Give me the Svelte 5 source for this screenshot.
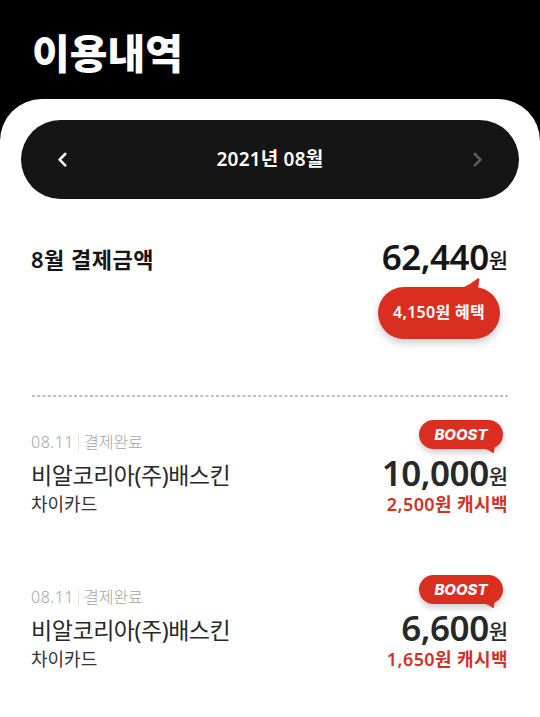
<script>
	let month = '2021년 08월';
	let total = '62,440';
	let benefit = '4,150원 혜택';

	let payments = [
		{
			date: '08.11',
			status: '결제완료',
			store: '비알코리아(주)배스킨',
			method: '차이카드',
			amount: '10,000',
			cashback: '2,500원 캐시백'
		},
		{
			date: '08.11',
			status: '결제완료',
			store: '비알코리아(주)배스킨',
			method: '차이카드',
			amount: '6,600',
			cashback: '1,650원 캐시백'
		}
	];
</script>

<main>
	<h1>이용내역</h1>
	<div class="sheet">
		<nav>
			<button aria-label="이전 달">
				<svg width="10" height="16" viewBox="0 0 10 16">
					<path d="M8.2 2 L2.6 7.7 L8.2 13.4" />
				</svg>
			</button>
			<span class="month">{month}</span>
			<button class="disabled" aria-label="다음 달" disabled>
				<svg width="10" height="16" viewBox="0 0 10 16">
					<path d="M1.8 2 L7.4 7.7 L1.8 13.4" />
				</svg>
			</button>
		</nav>

		<section class="summary">
			<h2>8월 결제금액</h2>
			<div class="right">
				<p class="amount"><span>{total}</span><em>원</em></p>
				<div class="benefit">
					<svg class="tail" width="20" height="12" viewBox="0 0 20 12">
						<path d="M0 10 Q9 6 15.6 0.5 Q17.6 -0.6 17.4 1.6 L16 11 Z" />
					</svg>
					<span>{benefit}</span>
				</div>
			</div>
		</section>

		<svg class="divider" width="476" height="2">
			<line x1="0" y1="1" x2="476" y2="1" />
		</svg>

		<ul>
			{#each payments as payment}
				<li>
					<div class="left">
						<p class="meta">
							<span class="date">{payment.date}</span><i></i><span>{payment.status}</span>
						</p>
						<p class="store">{payment.store}</p>
						<p class="method">{payment.method}</p>
					</div>
					<div class="right">
						<div class="boost">
							<span>BOOST</span>
							<svg class="tail" width="12" height="8" viewBox="0 0 12 8">
								<path d="M0 2 L9.5 0 L9 6 Q8.6 7.6 7.2 6.6 Q4 3.6 0 3 Z" />
							</svg>
						</div>
						<p class="amount"><span>{payment.amount}</span><em>원</em></p>
						<p class="cashback">{payment.cashback}</p>
					</div>
				</li>
			{/each}
		</ul>
	</div>
</main>

<style>
	:global(body) {
		background: #000;
	}

	main {
		width: 540px;
		height: 717px;
		overflow: hidden;
		background: #000;
		color: #151515;
		font-family: 'Noto Sans', 'Noto Sans CJK KR', sans-serif;
		white-space: nowrap;
	}

	h1,
	h2,
	p,
	ul {
		margin: 0;
		padding: 0;
	}

	h1 {
		height: 99px;
		padding-left: 32px;
		box-sizing: border-box;
		color: #fff;
		font-family: 'Noto Sans CJK KR', sans-serif;
		font-size: 41px;
		font-weight: 900;
		letter-spacing: 0;
		line-height: 102px;
	}

	.sheet {
		height: 618px;
		padding: 21px 21px 0;
		box-sizing: border-box;
		border-radius: 42px 42px 0 0;
		background: #fff;
	}

	nav {
		display: flex;
		align-items: center;
		justify-content: space-between;
		height: 79px;
		padding: 0 36px;
		border-radius: 40px;
		background: #151515;
		color: #fff;
	}

	button {
		display: flex;
		padding: 0;
		border: 0;
		background: none;
	}

	button path {
		fill: none;
		stroke: #fff;
		stroke-width: 2.6;
		stroke-linecap: round;
		stroke-linejoin: round;
	}

	.disabled path {
		stroke: #5c5c5c;
	}

	.month {
		height: 40px;
		font-size: 19px;
		font-weight: 600;
		letter-spacing: 0.2px;
		line-height: 39px;
	}

	.summary {
		display: flex;
		justify-content: space-between;
		height: 196px;
		padding: 39px 11px 0;
		box-sizing: border-box;
	}

	h2 {
		height: 40px;
		margin-left: -1px;
		font-size: 22px;
		font-weight: 600;
		letter-spacing: 0.5px;
		line-height: 42px;
	}

	.right {
		display: flex;
		flex-direction: column;
		align-items: flex-end;
	}

	.amount {
		display: flex;
		align-items: baseline;
		height: 42px;
		font-size: 35px;
		font-weight: 600;
		letter-spacing: -0.5px;
		line-height: 38px;
	}

	.amount em {
		position: relative;
		top: -2px;
		font-size: 21px;
		font-style: normal;
		font-weight: 500;
		letter-spacing: 0;
	}

	.benefit {
		position: relative;
		width: 122px;
		height: 52px;
		margin: 7px 8px 0 0;
		border-radius: 26px;
		background: #da2f20;
		box-shadow: 0 4px 8px rgba(0, 0, 0, 0.2);
		color: #fff;
		font-size: 16px;
		font-weight: 600;
		letter-spacing: 0.3px;
		line-height: 50px;
		text-align: center;
	}

	.tail {
		position: absolute;
		fill: #da2f20;
	}

	.benefit .tail {
		top: -9px;
		right: 18px;
	}

	.divider {
		display: block;
		margin: 0 11px;
	}

	.divider line {
		stroke: #aaa;
		stroke-width: 1.4;
		stroke-dasharray: 3 2.26;
	}

	ul {
		padding: 23px 11px 0;
		list-style: none;
	}

	li {
		display: flex;
		justify-content: space-between;
		height: 155.4px;
	}

	.left {
		margin-left: -1px;
	}

	.meta {
		display: flex;
		align-items: center;
		height: 20px;
		margin-top: 12px;
		color: #a4a4a4;
		font-size: 16px;
		font-weight: 300;
		letter-spacing: 0;
		line-height: 20px;
	}

	.date {
		letter-spacing: 0.5px;
	}

	.meta i {
		width: 1px;
		height: 17px;
		margin: 0 5px 0 4px;
		background: #e4e4e4;
	}

	.store {
		height: 34px;
		margin-top: 6px;
		color: #282828;
		font-size: 23px;
		letter-spacing: -0.45px;
		line-height: 34px;
	}

	.method {
		height: 26px;
		color: #333;
		font-size: 18px;
		letter-spacing: 0;
		line-height: 25px;
	}

	.boost {
		position: relative;
		width: 84px;
		height: 29px;
		margin-right: 5px;
		border-radius: 15px;
		background: #da2f20;
		box-shadow: 0 4px 6px rgba(0, 0, 0, 0.18);
		color: #fff;
		font-family: Inter, sans-serif;
		font-size: 15px;
		font-style: italic;
		font-weight: 800;
		line-height: 29px;
		text-align: center;
	}

	.boost .tail {
		right: 6px;
		bottom: -5px;
	}

	li .amount {
		height: 41px;
		margin-top: 5px;
		color: #282828;
	}

	.cashback {
		height: 26px;
		color: #ce3327;
		font-size: 18px;
		font-weight: 600;
		letter-spacing: 0.4px;
		line-height: 19px;
	}
</style>
